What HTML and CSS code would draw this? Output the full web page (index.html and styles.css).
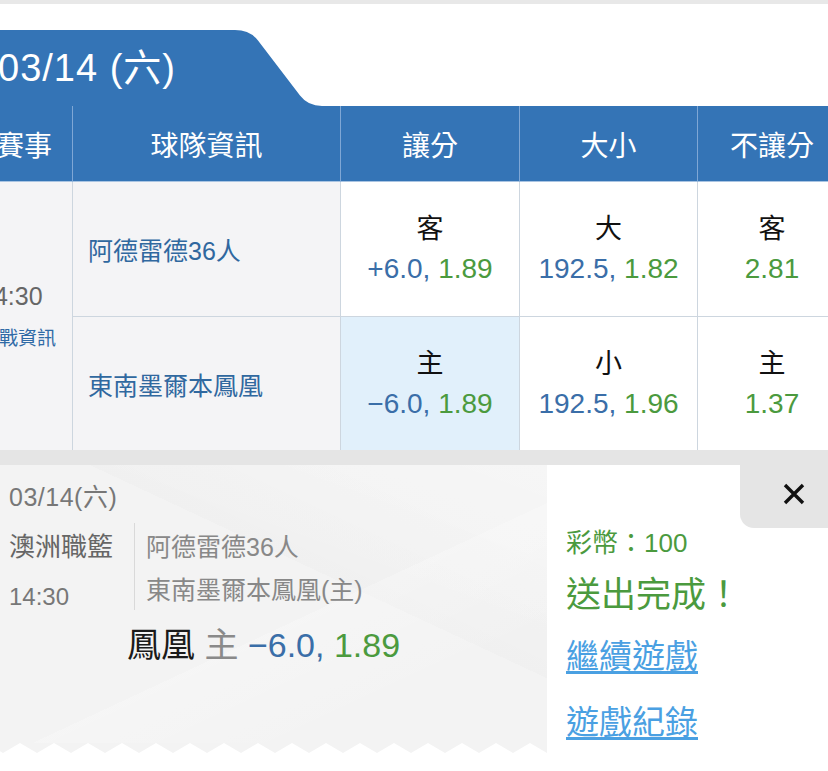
FILE: index.html
```html
<!DOCTYPE html>
<html lang="zh-Hant">
<head>
<meta charset="utf-8">
<title>投注完成</title>
<link rel="stylesheet" href="styles.css">
</head>
<body>
<div class="topbar"></div>
<div class="board">
  <div class="date-row">
    <div class="date-tab">03/14 (六)</div>
    <svg class="tab-slope" width="92" height="76" viewBox="0 0 92 76"><path d="M0 0 H5 Q20 0 28 10.5 L70 65.5 Q78 76 92 76 H0 Z" fill="#3474b6"/></svg>
  </div>
  <div class="grid">
    <div class="hd">賽事</div>
    <div class="hd">球隊資訊</div>
    <div class="hd">讓分</div>
    <div class="hd">大小</div>
    <div class="hd hd-last">不讓分</div>

    <div class="match">
      <span class="time">14:30</span>
      <span class="vs">對戰資訊</span>
    </div>
    <div class="team">阿德雷德36人</div>
    <div class="odd"><span class="pick">客</span><span><span class="line">+6.0,</span> <span class="price">1.89</span></span></div>
    <div class="odd"><span class="pick">大</span><span><span class="line">192.5,</span> <span class="price">1.82</span></span></div>
    <div class="odd odd-last"><span class="pick">客</span><span class="price">2.81</span></div>

    <div class="team row2">東南墨爾本鳳凰</div>
    <div class="odd row2 selected"><span class="pick">主</span><span><span class="line">−6.0,</span> <span class="price">1.89</span></span></div>
    <div class="odd row2"><span class="pick">小</span><span><span class="line">192.5,</span> <span class="price">1.96</span></span></div>
    <div class="odd row2 odd-last"><span class="pick">主</span><span class="price">1.37</span></div>
  </div>
</div>
<div class="strip"></div>
<div class="result">
  <div class="ticket">
    <div class="ticket-body">
      <div class="t-date">03/14(六)</div>
      <div class="t-info">
        <div class="t-left">
          <div class="t-league">澳洲職籃</div>
          <div class="t-time">14:30</div>
        </div>
        <div class="t-teams">
          <div class="t-team1">阿德雷德36人</div>
          <div class="t-team2">東南墨爾本鳳凰(主)</div>
        </div>
      </div>
      <div class="t-bet"><span class="b-team">鳳凰</span> <span class="b-side">主</span> <span class="line">−6.0,</span> <span class="price">1.89</span></div>
    </div>
    <svg class="zigzag" width="547" height="10" viewBox="0 0 547 10">
      <defs>
        <pattern id="zz" x="20" y="0" width="34" height="10" patternUnits="userSpaceOnUse">
          <path d="M0 0 L17 10 L34 0 Z" fill="#f3f3f3"/>
        </pattern>
      </defs>
      <rect x="0" y="0" width="547" height="10" fill="url(#zz)"/>
    </svg>
  </div>
  <div class="done">
    <div class="close">
      <svg width="22" height="22" viewBox="0 0 22 22"><path d="M2 2 L20 20 M20 2 L2 20" stroke="#111" stroke-width="3.4" stroke-linecap="butt"/></svg>
    </div>
    <div class="coins">彩幣：100</div>
    <div class="sent">送出完成！</div>
    <a class="link link-first" href="#">繼續遊戲</a>
    <a class="link" href="#">遊戲紀錄</a>
  </div>
</div>
</body>
</html>
```
FILE: styles.css
```css
* { box-sizing: border-box; }
html, body { margin: 0; padding: 0; }
body {
  width: 828px;
  height: 771px;
  overflow: hidden;
  background: #fff;
  font-family: "Liberation Sans", "Noto Sans CJK TC", sans-serif;
  color: #222;
}
.topbar { height: 4px; background: #e8e8e8; }

.board { margin-left: -24px; width: 870px; padding-top: 26px; }
.date-row { display: flex; height: 76px; }
.date-tab {
  width: 254px;
  height: 76px;
  background: #3474b6;
  color: #fff;
  font-size: 38px;
  letter-spacing: 1px;
  line-height: 76px;
  padding-left: 22px;
  white-space: nowrap;
}
.tab-slope { display: block; }

.grid {
  display: grid;
  grid-template-columns: 97px 268px 179px 178px 148px;
  grid-template-rows: 76px 135px 133px;
}
.hd {
  background: #3474b6;
  color: #fff;
  font-size: 28px;
  display: flex;
  align-items: center;
  justify-content: center;
  border-right: 1px solid #7fa7d5;
  border-bottom: 1px solid #a9c4e2;
}
.hd-last { border-right: none; }

.match {
  grid-row: 2 / 4;
  background: #f4f4f6;
  border-right: 1px solid #cdd6df;
  display: flex;
  flex-direction: column;
  justify-content: center;
  gap: 15px;
  padding-left: 4px;
}
.time { font-size: 25px; line-height: 30px; color: #666; }
.vs { font-size: 19px; line-height: 26px; color: #2f6aa6; white-space: nowrap; }

.team {
  background: #f4f4f6;
  border-right: 1px solid #cdd6df;
  border-bottom: 1px solid #cdd6df;
  display: flex;
  align-items: center;
  padding-left: 15px;
  font-size: 25px;
  color: #30689f;
}
.odd {
  background: #fff;
  border-right: 1px solid #cdd6df;
  border-bottom: 1px solid #cdd6df;
  display: flex;
  flex-direction: column;
  align-items: center;
  justify-content: center;
  font-size: 28px;
  line-height: 39px;
  white-space: nowrap;
}
.odd-last { border-right: none; }
.row2 { border-bottom: none; }
.selected { background: #e1f0fb; }
.pick { color: #111; font-size: 27px; }
.line { color: #3a6ea8; }
.price { color: #4b9a3e; }

.strip { height: 15px; background: #e5e5e5; }

.result { display: flex; height: 306px; }
.ticket { width: 547px; display: flex; flex-direction: column; }
.ticket-body {
  height: 278px;
  padding: 15px 0 0 9px;
  background:
    linear-gradient(155deg, rgba(255,255,255,0) 55%, rgba(255,255,255,0.22) 55%, rgba(255,255,255,0) 80%),
    linear-gradient(25deg, rgba(0,0,0,0) 60%, rgba(0,0,0,0.01) 60%, rgba(0,0,0,0) 85%),
    linear-gradient(200deg, rgba(255,255,255,0.25) 0%, rgba(255,255,255,0) 40%),
    #f3f3f3;
}
.zigzag { display: block; }
.t-date { font-size: 25px; letter-spacing: 0.5px; line-height: 34px; color: #777; margin-bottom: 9px; }
.t-info { display: flex; align-items: flex-start; }
.t-left { width: 125px; }
.t-league { font-size: 26px; line-height: 48px; color: #666; }
.t-time { font-size: 24px; line-height: 52px; color: #777; }
.t-teams {
  border-left: 1px solid #d9d9d9;
  padding-left: 11px;
  font-size: 25px;
  color: #888;
}
.t-team1 { line-height: 48px; }
.t-team2 { line-height: 39px; }
.t-bet {
  margin-left: 118px;
  margin-top: 2px;
  font-size: 34px;
  line-height: 40px;
  white-space: nowrap;
}
.b-team { color: #1a1a1a; }
.b-side { color: #8a8a8a; }

.done {
  width: 281px;
  background: #fff;
  display: flex;
  flex-direction: column;
  padding-left: 19px;
}
.close {
  align-self: flex-end;
  width: 88px;
  height: 63px;
  background: #e5e5e5;
  border-bottom-left-radius: 14px;
  padding: 18px 0 0 43px;
}
.close svg { display: block; }
.coins { font-size: 26px; line-height: 30px; color: #4b9a3e; }
.sent { font-size: 35px; line-height: 44px; color: #4b9a3e; margin-top: 15px; }
.link {
  display: block;
  width: max-content;
  font-size: 33px;
  line-height: 44px;
  color: #4aa0e2;
  text-decoration: underline;
  text-underline-offset: 3px;
  margin-top: 22px;
}
.link-first { margin-top: 18px; }
```
